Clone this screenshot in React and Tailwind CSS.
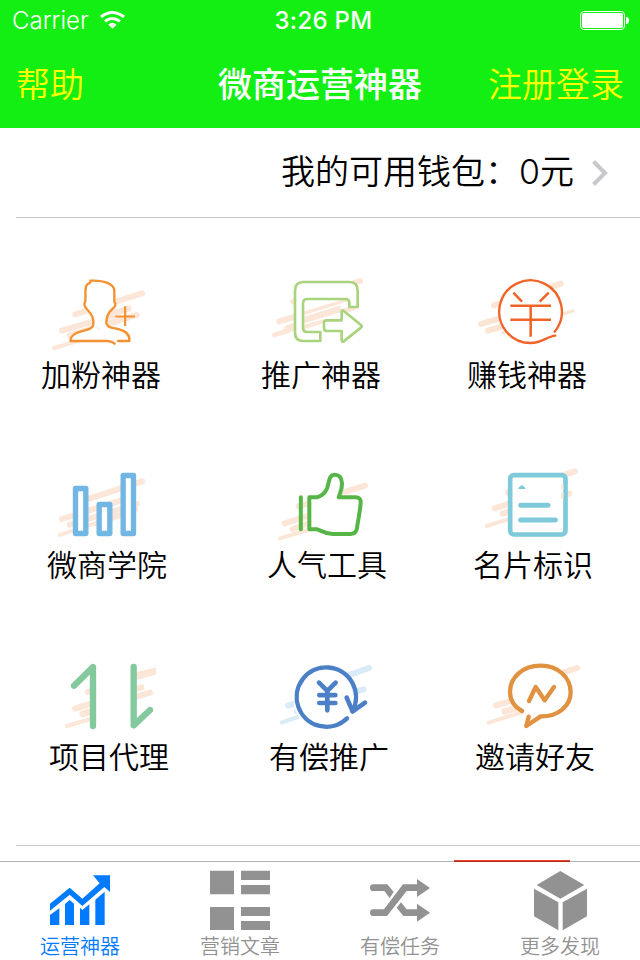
import React, { useState } from 'react';

const Stripes = ({ color = '#fce6d8', children }) => (
  <g stroke={color} strokeWidth="18" strokeLinecap="round" fill="none">{children}</g>
);

const FansIcon = () => (
  <svg viewBox="33 48 360 228" className="w-[120px] h-[76px]">
    <Stripes>
      <path d="M136 163L336 100" />
      <path d="M96 212L250 167" />
      <path d="M120 226L320 165" />
      <path d="M250 160L296 146M240 190L262 184" />
      <path d="M72 264L180 232" strokeWidth="12" />
    </Stripes>
    <path d="M190 194C186 212 160 208 138 220C124 228 121 234 121 244H234Q246 245 254 251M264 243H298C300 228 290 214 268 208C248 203 232 204 229 194C229 172 232 158 247 147C255 139 258 132 252 125V92C251 74 228 62 181 62Q184 68 174 70C164 76 168 100 166 124C160 130 164 142 173 150C185 162 192 178 190 194Z" fill="white" />
    <path d="M254 251Q246 244 234 243H121C121 234 124 228 138 220C160 208 188 212 190 194C192 178 185 162 173 150C164 142 160 130 166 124C168 100 162 78 174 71Q184 68 181 62C228 60 252 74 253 92V125C259 132 257 139 247 147C234 158 229 172 229 190C232 204 248 203 268 208C290 214 300 226 298 243H264" fill="none" stroke="#f49130" strokeWidth="7" strokeLinecap="round" strokeLinejoin="round" />
    <path d="M256 169.500H315M285.500 139V198" stroke="#f49130" strokeWidth="6.500" fill="none" />
  </svg>
);

const PromoteIcon = () => (
  <svg viewBox="33 48 360 228" className="w-[120px] h-[76px]">
    <Stripes>
      <path d="M130 125L330 63" />
      <path d="M88 184L305 119" />
      <path d="M112 204L310 143" />
      <path d="M73 225L180 190" strokeWidth="14" />
    </Stripes>
    <path d="M160 64H298Q325 64 325 92V140H298V128Q298 117 286 117H172Q159 117 159 130V203Q159 216 172 216H211V243H160Q135 243 135 218V90Q135 64 160 64Z" fill="white" />
    <path d="M172 117H286Q298 117 298 128V140L275 148V181H230Q222 181 222 190V216H172Q159 216 159 203V130Q159 117 172 117Z" fill="white" />
    <path d="M163 190L272 157V136L163 170Z" fill="#fce6d8" />
    <path d="M163 165L294 124V118H282L163 154Z" fill="#fce6d8" />
    <path d="M163 208L220 190V178L163 194Z" fill="#fce6d8" />
    <path d="M160 66H298Q323 66 323 92V141H298V128Q298 117 286 117H172Q159 117 159 130V203Q159 216 172 216H211V243H160Q135 243 135 218V92Q135 66 160 66Z" fill="none" stroke="#a9d37c" strokeWidth="8" strokeLinejoin="round" />
    <path d="M227 181H275V153Q276 149 281 153L333 195Q337 199 333 203L281 244Q276 247 275 241V213H231Q222 213 222 203V188Q222 181 230 181Z" fill="white" stroke="#a9d37c" strokeWidth="8" strokeLinejoin="round" />
  </svg>
);

const EarnIcon = () => (
  <svg viewBox="21 48 360 228" className="w-[120px] h-[76px]">
    <Stripes color="#fae5d2">
      <path d="M102 136L302 71" />
      <path d="M63 192L130 172" />
      <path d="M84 212L150 192" />
      <path d="M130 218L338 153" strokeWidth="10" />
    </Stripes>
    <circle cx="212" cy="155" r="94" fill="white" />
    <path d="M286 227C262 229 246 249 212 249A94 94 0 1 1 284 215" fill="none" stroke="#f06428" strokeWidth="7" strokeLinecap="round" />
    <path d="M160 98L186 125M266 98L239 125M151 137.500H273M151 179.500H273M212 139V230" fill="none" stroke="#f06428" strokeWidth="7.500" />
  </svg>
);

const AcademyIcon = () => (
  <svg viewBox="51 33 360 228" className="w-[120px] h-[76px]">
    <Stripes>
      <path d="M180 130L337 79" />
      <path d="M96 192L300 128" />
      <path d="M119 209L320 147" />
      <path d="M200 205L316 163" />
      <path d="M89 240L200 204" strokeWidth="11" />
    </Stripes>
    <g fill="white" stroke="#72b6e4" strokeWidth="16" strokeLinejoin="round">
      <rect x="136.500" y="100.500" width="31" height="135" />
      <rect x="207.500" y="148.500" width="32" height="87" />
      <rect x="279.500" y="61.500" width="31" height="174" />
    </g>
  </svg>
);

const PopularIcon = () => (
  <svg viewBox="51 33 360 228" className="w-[120px] h-[76px]">
    <Stripes>
      <path d="M146 154L345 92" />
      <path d="M104 205L180 181" />
      <path d="M128 222L190 200" />
      <path d="M310 168L328 160" />
      <path d="M90 250L190 220" strokeWidth="12" />
    </Stripes>
    <path d="M178 127H201C222 120 232 108 235 86C239 68 242 60 252 59C267 58 275 68 276 84C277 102 270 113 266 127H317Q333 127 332 142C331 166 325 190 321 219Q319 236 302 237H249C226 237 217 228 202 223H178Z" fill="white" stroke="#55b546" strokeWidth="12" strokeLinejoin="round" />
    <path d="M152.500 127V223" stroke="#55b546" strokeWidth="12" strokeLinecap="round" />
  </svg>
);

const CardIcon = () => (
  <svg viewBox="39 33 360 228" className="w-[120px] h-[76px]">
    <Stripes>
      <path d="M144 112L345 49" />
      <path d="M104 160L170 139" />
      <path d="M128 176L328 116" />
      <path d="M80 213L180 182" strokeWidth="12" />
    </Stripes>
    <rect x="150.500" y="60.500" width="166" height="178" rx="11" fill="white" stroke="#7ecada" strokeWidth="14" />
    <path d="M307 88V104M307 112V132" stroke="#fce6d8" strokeWidth="7" />
    <path d="M182 150.500H264M182 195H286" stroke="#7ecada" strokeWidth="15" strokeLinecap="round" />
    <path d="M174 102Q177 95 181 94Q185 87 190 94Q194 95 197 102Z" fill="#7ecada" />
  </svg>
);

const AgentIcon = () => (
  <svg viewBox="57 24 360 228" className="w-[120px] h-[76px]">
    <Stripes>
      <path d="M174 126L190 121" />
      <path d="M135 176L182 161" />
      <path d="M158 192L182 184" strokeWidth="20" />
      <path d="M111 228L185 206" strokeWidth="12" />
      <path d="M318 117L334 112M320 140L360 128" />
    </Stripes>
    <path d="M318 67L378 52V74L318 91Z" fill="#fce6d8" />
    <path d="M132 107L189 51V228M311 51V226L360 180" fill="none" stroke="#83c99d" strokeWidth="19" strokeLinecap="round" strokeLinejoin="round" />
  </svg>
);

const PaidIcon = () => (
  <svg viewBox="57 24 360 228" className="w-[120px] h-[76px]">
    <Stripes color="#d8ebf7">
      <path d="M300 74L357 54" />
      <path d="M310 127L341 118" />
      <path d="M114 167L160 152" />
      <path d="M140 184L170 174" />
      <path d="M95 217L180 189" strokeWidth="12" />
    </Stripes>
    <path d="M305 180A90 90 0 1 0 291 205Z" fill="white" />
    <path d="M291 205A89 89 0 1 1 307 184" fill="none" stroke="#4b80c6" strokeWidth="13" strokeLinecap="round" />
    <path d="M290 143L308 184L345 158" fill="none" stroke="#4b80c6" strokeWidth="14" strokeLinecap="round" strokeLinejoin="round" />
    <path d="M207 98L232 123L257 98M232 123V181M208 135.500H256M208 159H256" fill="none" stroke="#4b80c6" strokeWidth="14" strokeLinecap="round" />
  </svg>
);

const InviteIcon = () => (
  <svg viewBox="675 24 360 228" className="w-[120px] h-[76px]">
    <Stripes>
      <path d="M940 68L981 54" />
      <path d="M738 166L790 150" />
      <path d="M764 184L815 170" strokeWidth="20" />
      <path d="M716 218L830 182" strokeWidth="12" />
    </Stripes>
    <path d="M836 200L829 228L872 198C924 195 962 168 962 127C962 83 925 47 872 47C818 47 780 82 780 126C780 151 794 171 816 183Z" fill="white" />
    <path d="M816 183C794 171 780 151 780 126C780 82 818 47 872 47C925 47 962 83 962 127C962 168 924 200 872 199L829 228L836 200" fill="none" stroke="#e19241" strokeWidth="13" strokeLinecap="round" strokeLinejoin="round" />
    <path d="M837 153L857 111L884 151L912 111" fill="none" stroke="#e19241" strokeWidth="13" strokeLinecap="round" strokeLinejoin="round" />
  </svg>
);

const ChartIcon = () => (
  <svg viewBox="120 99 240 192" className="w-20 h-16" fill="currentColor">
    <path d="M150 206L209 158L247 191L299 145L279 121H330V171L313 156L247 213L209 179L150 227Z" />
    <path d="M150 240L178 220V270H150ZM195 207L209 195L222 206V270H195ZM240 218L247 225L268 208V270H240ZM286 194L314 170V270H286Z" />
  </svg>
);

const ArticleIcon = () => (
  <svg viewBox="600 99 240 192" className="w-20 h-16" fill="currentColor">
    <path d="M630 107H702V178H630ZM723 107H810V135H723ZM723 150H810V178H723ZM630 216H702V285H630ZM723 216H810V243H723ZM723 258H810V285H723Z" />
  </svg>
);

const ShuffleIcon = () => (
  <svg viewBox="120 99 240 192" className="w-20 h-16" fill="currentColor">
    <path d="M160 148H202L221 171L209 189L193 168H160A10 10 0 0 1 160 148Z" />
    <path d="M160 223H192L249 148H291V132L330 159L291 186V168H260L201 243H160A10 10 0 0 1 160 223Z" />
    <path d="M243 202L260 223H291V206L330 233L291 260V243H250L230 218Z" />
  </svg>
);

const BoxIcon = () => (
  <svg viewBox="600 99 240 192" className="w-20 h-16" fill="currentColor">
    <path d="M721 108L793 150L721 191L650 150ZM642 161L715 202V286L642 244ZM728 202L801 161V244L728 286Z" />
  </svg>
);

const rows = [
  {
    className: 'flex pl-[41px]',
    items: [
      { label: '加粉神器', Icon: FansIcon },
      { label: '推广神器', Icon: PromoteIcon },
      { label: '赚钱神器', Icon: EarnIcon },
    ],
  },
  {
    className: 'flex pl-[47px] mt-[66px]',
    items: [
      { label: '微商学院', Icon: AcademyIcon },
      { label: '人气工具', Icon: PopularIcon },
      { label: '名片标识', Icon: CardIcon },
    ],
  },
  {
    className: 'flex pl-[49px] mt-[68px]',
    items: [
      { label: '项目代理', Icon: AgentIcon },
      { label: '有偿推广', Icon: PaidIcon },
      { label: '邀请好友', Icon: InviteIcon },
    ],
  },
];

const columnGaps = ['mr-[100px]', 'mr-[86px]', ''];

const tabs = [
  { label: '运营神器', Icon: ChartIcon },
  { label: '营销文章', Icon: ArticleIcon },
  { label: '有偿任务', Icon: ShuffleIcon },
  { label: '更多发现', Icon: BoxIcon },
];

function StatusBar() {
  return (
    <div className="h-10 grid grid-cols-3 items-center pl-3 pr-[11px] text-white text-[24px] leading-10">
      <div className="flex items-center gap-[11px]">
        <span className="pt-[2px] font-[350] leading-[38px]">Carrier</span>
        <svg viewBox="0 0 75 54" className="w-[25px] h-[18px]" fill="none" stroke="white" strokeWidth="9">
          <path d="M3 18Q37 -9 72 18M15 31Q37 14 60 31" />
          <path d="M25 41Q37 30 50 41L37.500 53Z" fill="white" stroke="none" />
        </svg>
      </div>
      <div className="pl-[6px] pt-[2px] text-center font-medium leading-[38px] whitespace-nowrap tracking-[0.3px]">3:26 PM</div>
      <div className="flex justify-end items-center">
        <div className="w-[45px] h-[19px] border border-white rounded-[4px] p-px">
          <div className="w-full h-full bg-white rounded-[2px]" />
        </div>
        <div className="w-[3px] h-[7px] ml-px bg-white rounded-r-full" />
      </div>
    </div>
  );
}

export default function App() {
  const [activeTab, setActiveTab] = useState(0);

  return (
    <div className="w-[640px] h-[960px] flex flex-col bg-white overflow-hidden text-black font-['Inter','Noto_Sans_CJK_SC',sans-serif]">
      <header className="h-32 shrink-0 bg-[#13ee13]">
        <StatusBar />
        <nav className="h-[88px] pt-[2px] flex items-center justify-between px-4 text-[34px] leading-[86px] text-[#ffff00] whitespace-nowrap">
          <button className="w-[136px] text-left font-[350]">帮助</button>
          <h1 className="font-medium text-white">微商运营神器</h1>
          <button className="w-[136px] text-right font-[350]">注册登录</button>
        </nav>
      </header>

      <div className="h-[90px] shrink-0 ml-4 pr-8 border-b border-[#c8c7cc] flex items-center justify-end text-[34px] font-[350] whitespace-nowrap">
        <span className="pb-[3px]">我的可用钱包：0元</span>
        <svg viewBox="0 0 16 26" className="w-4 h-[26px] ml-[18px]" fill="none" stroke="#c7c7cc" strokeWidth="4">
          <path d="M1.500 1.500L13 13L1.500 24.500" />
        </svg>
      </div>

      <main className="h-[628px] shrink-0 pt-[58px]">
        <div className="h-[570px] ml-4 border-b border-[#c8c7cc]">
          <div className="-ml-4">
            {rows.map((row) => (
              <div key={row.items[0].label} className={row.className}>
                {row.items.map(({ label, Icon }, i) => (
                  <button key={label} className={`w-[120px] flex flex-col ${columnGaps[i]}`}>
                    <Icon />
                    <span className="h-12 leading-[46px] text-[30px] font-[350] whitespace-nowrap">{label}</span>
                  </button>
                ))}
              </div>
            ))}
          </div>
        </div>
      </main>

      <div className="h-4 shrink-0 flex items-end">
        <div className="w-[116px] h-[2px] ml-[454px] bg-[#f3412b]" />
      </div>

      <footer className="h-[99px] shrink-0 -mt-px z-10 grid grid-cols-4 border-t border-black/30">
        {tabs.map(({ label, Icon }, i) => (
          <button
            key={label}
            onClick={() => setActiveTab(i)}
            className={`flex flex-col items-center pt-[6px] ${activeTab === i ? 'text-[#007aff]' : 'text-[#929292]'}`}
          >
            <Icon />
            <span className="h-7 leading-[30px] text-xl font-[350] whitespace-nowrap">{label}</span>
          </button>
        ))}
      </footer>
    </div>
  );
}
